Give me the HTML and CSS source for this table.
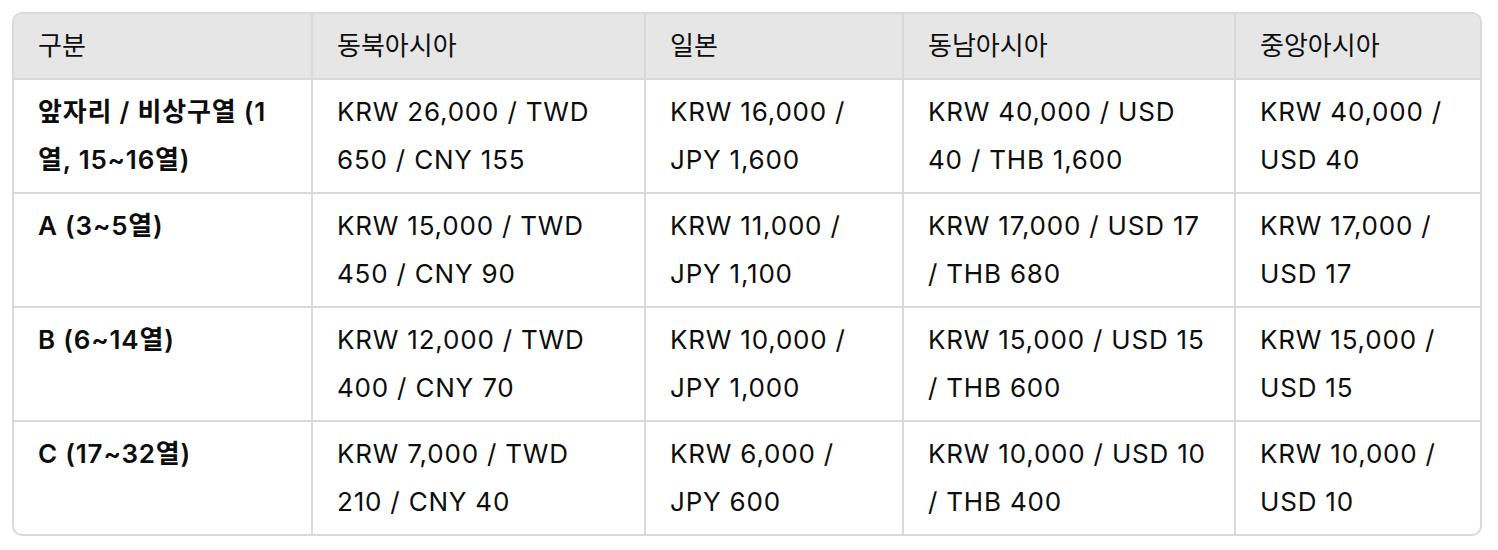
FILE: index.html
```html
<!DOCTYPE html>
<html lang="ko">
<head>
<meta charset="utf-8">
<link rel="stylesheet" href="styles.css">
</head>
<body>
<div class="wrap">
<table class="fare">
<colgroup>
<col class="c1"><col class="c2"><col class="c3"><col class="c4"><col class="c5">
</colgroup>
<thead>
<tr><th>구분</th><th>동북아시아</th><th>일본</th><th>동남아시아</th><th>중앙아시아</th></tr>
</thead>
<tbody>
<tr><td class="k">앞자리 / 비상구열 (1열, 15~16열)</td><td>KRW 26,000 / TWD 650 / CNY 155</td><td>KRW 16,000 / JPY 1,600</td><td>KRW 40,000 / USD 40 / THB 1,600</td><td>KRW 40,000 / USD 40</td></tr>
<tr><td class="k">A (3~5열)</td><td>KRW 15,000 / TWD 450 / CNY 90</td><td>KRW 11,000 / JPY 1,100</td><td>KRW 17,000 / USD 17 / THB 680</td><td>KRW 17,000 / USD 17</td></tr>
<tr><td class="k">B (6~14열)</td><td>KRW 12,000 / TWD 400 / CNY 70</td><td>KRW 10,000 / JPY 1,000</td><td>KRW 15,000 / USD 15 / THB 600</td><td>KRW 15,000 / USD 15</td></tr>
<tr><td class="k">C (17~32열)</td><td>KRW 7,000 / TWD 210 / CNY 40</td><td>KRW 6,000 / JPY 600</td><td>KRW 10,000 / USD 10 / THB 400</td><td>KRW 10,000 / USD 10</td></tr>
</tbody>
</table>
</div>
</body>
</html>
```
FILE: styles.css
```css
html, body { margin: 0; padding: 0; background: #fff; }
body { padding: 12px; }
.wrap {
  width: 1466px;
  border: 2px solid #d9d9d9;
  border-radius: 10px;
  overflow: hidden;
}
.fare {
  width: 1466px;
  table-layout: fixed;
  border-collapse: separate;
  border-spacing: 0;
  font-family: Inter, "Noto Sans CJK KR", sans-serif;
  font-size: 26px;
  letter-spacing: 0.8px;
  line-height: 48px;
  color: #0d0d0d;
}
.c1 { width: 299px; }
.c2 { width: 333px; }
.c3 { width: 258px; }
.c4 { width: 332px; }
.c5 { width: 244px; }
.fare th, .fare td {
  padding: 8px 24px;
  text-align: left;
  vertical-align: top;
  border-right: 2px solid #d9d9d9;
  border-bottom: 2px solid #d9d9d9;
}
.fare th { font-weight: 400; background: #e6e6e6; letter-spacing: 0; }
.fare th:last-child, .fare td:last-child { border-right: none; }
.fare tbody tr:last-child td { border-bottom: none; }
.fare td.k { font-weight: 600; }
```
